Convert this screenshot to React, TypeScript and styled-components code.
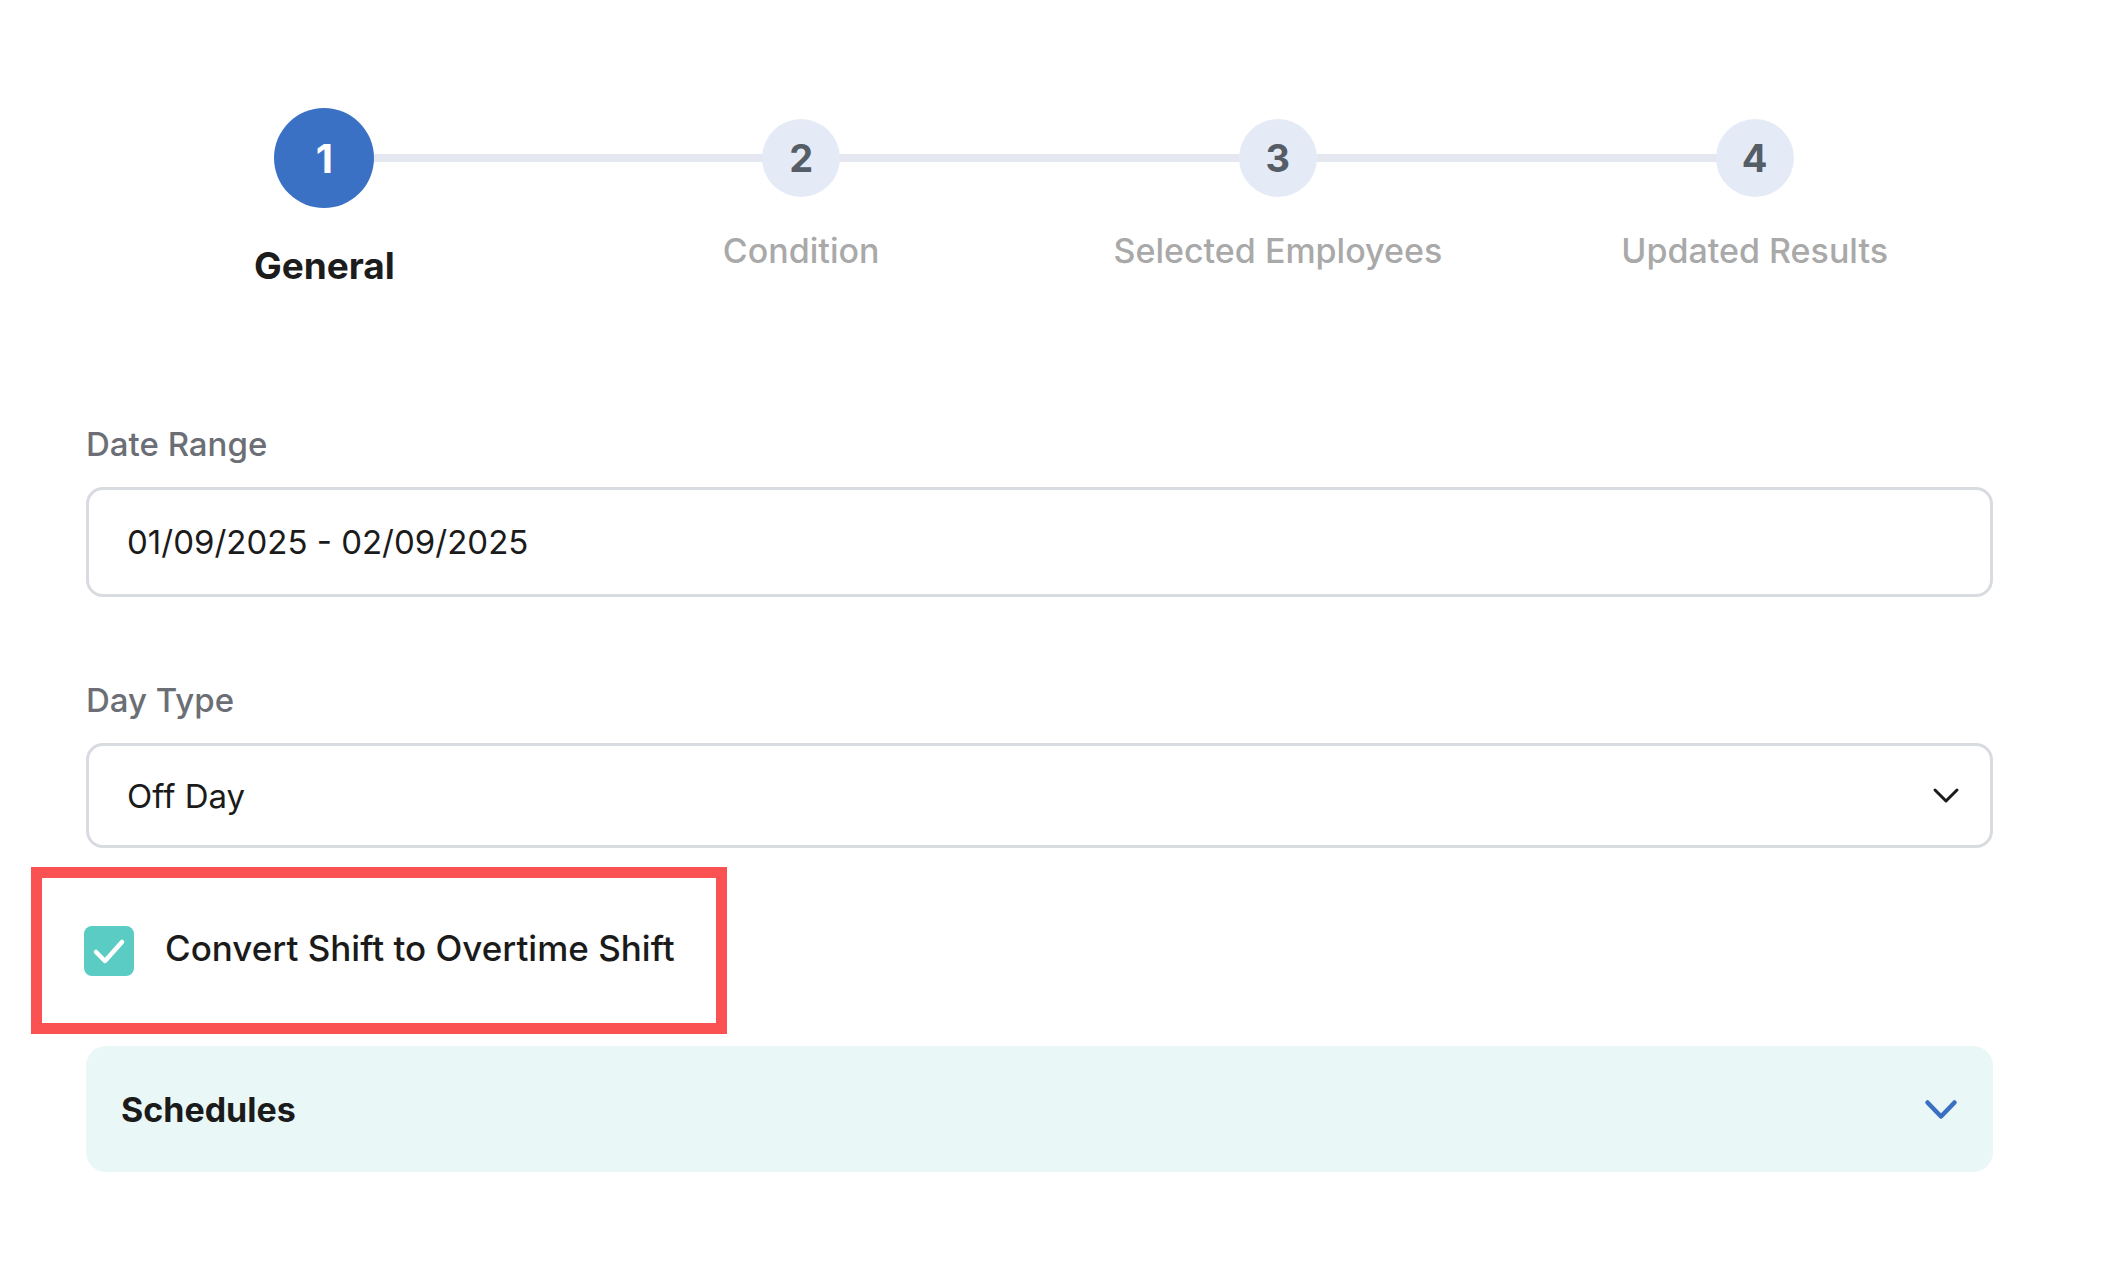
import styled, { createGlobalStyle } from "styled-components";

const GlobalStyle = createGlobalStyle`
  * {
    box-sizing: border-box;
  }

  body {
    margin: 0;
    background: #ffffff;
    font-family: Inter, "Open Sans", Arial, sans-serif;
    color: #1c1c1c;
  }
`;

const steps = ["General", "Condition", "Selected Employees", "Updated Results"];

const ChevronDown = ({ color, width, height, stroke }: { color: string; width: number; height: number; stroke: number }) => (
  <svg width={width} height={height} viewBox={`0 0 ${width} ${height}`} fill="none">
    <path
      d={`M${stroke} ${stroke} L${width / 2} ${height - stroke} L${width - stroke} ${stroke}`}
      stroke={color}
      strokeWidth={stroke}
      strokeLinecap="round"
      strokeLinejoin="round"
    />
  </svg>
);

export default function App() {
  const current = 0;

  return <Root>
    <GlobalStyle />
    <Stepper>
      {steps.map((label, i) => (
        <Step key={label} $last={i === steps.length - 1}>
          <CircleSlot>
            <Circle $active={i === current}>{i + 1}</Circle>
          </CircleSlot>
          <StepLabel $active={i === current}>{label}</StepLabel>
        </Step>
      ))}
    </Stepper>

    <Form>
      <Field>
        <FieldLabel>Date Range</FieldLabel>
        <Input $height={110}>01/09/2025 - 02/09/2025</Input>
      </Field>

      <Field $top={83}>
        <FieldLabel>Day Type</FieldLabel>
        <Input $height={105}>
          Off Day
          <ChevronDown color="#1b1b1b" width={28} height={17} stroke={3} />
        </Input>
      </Field>

      <Highlight>
        <CheckBox>
          <svg width="50" height="50" viewBox="0 0 50 50" fill="none">
            <path d="M12 26 L21 35 L38 16" stroke="#ffffff" strokeWidth="4.5" strokeLinecap="round" strokeLinejoin="round" />
          </svg>
        </CheckBox>
        <CheckLabel>Convert Shift to Overtime Shift</CheckLabel>
      </Highlight>

      <Accordion>
        <AccordionTitle>Schedules</AccordionTitle>
        <ChevronDown color="#3a6fc2" width={36} height={23} stroke={4.5} />
      </Accordion>
    </Form>
  </Root>
}

const Root = styled.div`
  min-height: 1272px;
  padding: 108px 116px 0 86px;
`;

const Stepper = styled.div`
  display: grid;
  grid-template-columns: repeat(4, 1fr);
`;

const Step = styled.div<{ $last?: boolean }>`
  position: relative;
  display: flex;
  flex-direction: column;
  align-items: center;

  &::before {
    content: "";
    display: ${p => p.$last ? "none" : "block"};
    position: absolute;
    top: 46px;
    left: 50%;
    width: 100%;
    height: 8px;
    background: #e4e6f0;
  }
`;

const CircleSlot = styled.div`
  position: relative;
  z-index: 1;
  height: 100px;
  display: flex;
  align-items: center;
  justify-content: center;
`;

const Circle = styled.div<{ $active?: boolean }>`
  width: ${p => p.$active ? 100 : 78}px;
  height: ${p => p.$active ? 100 : 78}px;
  border-radius: 50%;
  display: flex;
  align-items: center;
  justify-content: center;
  background: ${p => p.$active ? "#3a71c4" : "#e5ebf6"};
  color: ${p => p.$active ? "#ffffff" : "#555d66"};
  font-size: ${p => p.$active ? 40 : 38}px;
  font-weight: 700;
`;

const StepLabel = styled.div<{ $active?: boolean }>`
  margin-top: ${p => p.$active ? 36 : 22}px;
  font-size: ${p => p.$active ? 37 : 34}px;
  line-height: ${p => p.$active ? 44 : 41}px;
  font-weight: ${p => p.$active ? 700 : 500};
  color: ${p => p.$active ? "#1c1c1c" : "#a9a9a9"};
  white-space: nowrap;
`;

const Form = styled.div`
  margin-top: 136px;
  display: flex;
  flex-direction: column;
`;

const Field = styled.div<{ $top?: number }>`
  margin-top: ${p => p.$top ?? 0}px;
  display: flex;
  flex-direction: column;
  gap: 23px;
`;

const FieldLabel = styled.div`
  font-size: 33px;
  line-height: 40px;
  font-weight: 500;
  color: #6b6f75;
`;

const Input = styled.div<{ $height: number }>`
  height: ${p => p.$height}px;
  display: flex;
  align-items: center;
  justify-content: space-between;
  padding: 0 30px 0 38px;
  border: 3px solid #d8dbdf;
  border-radius: 17px;
  font-size: 33px;
  color: #1b1b1b;
`;

const Highlight = styled.div`
  margin: 19px 0 0 -55px;
  width: 696px;
  height: 167px;
  display: flex;
  align-items: center;
  gap: 31px;
  padding-left: 42px;
  border: 11px solid #fa5252;
`;

const CheckBox = styled.div`
  width: 50px;
  height: 50px;
  border-radius: 8px;
  background: #5bccc4;
  display: flex;
`;

const CheckLabel = styled.div`
  padding-bottom: 5px;
  font-size: 35px;
  font-weight: 500;
  color: #1b1b1b;
  white-space: nowrap;
`;

const Accordion = styled.div`
  margin-top: 12px;
  height: 126px;
  display: flex;
  align-items: center;
  justify-content: space-between;
  padding: 0 34px 0 35px;
  background: #eaf7f7;
  border-radius: 20px;
`;

const AccordionTitle = styled.div`
  font-size: 34px;
  font-weight: 700;
  color: #1b1b1b;
`;
